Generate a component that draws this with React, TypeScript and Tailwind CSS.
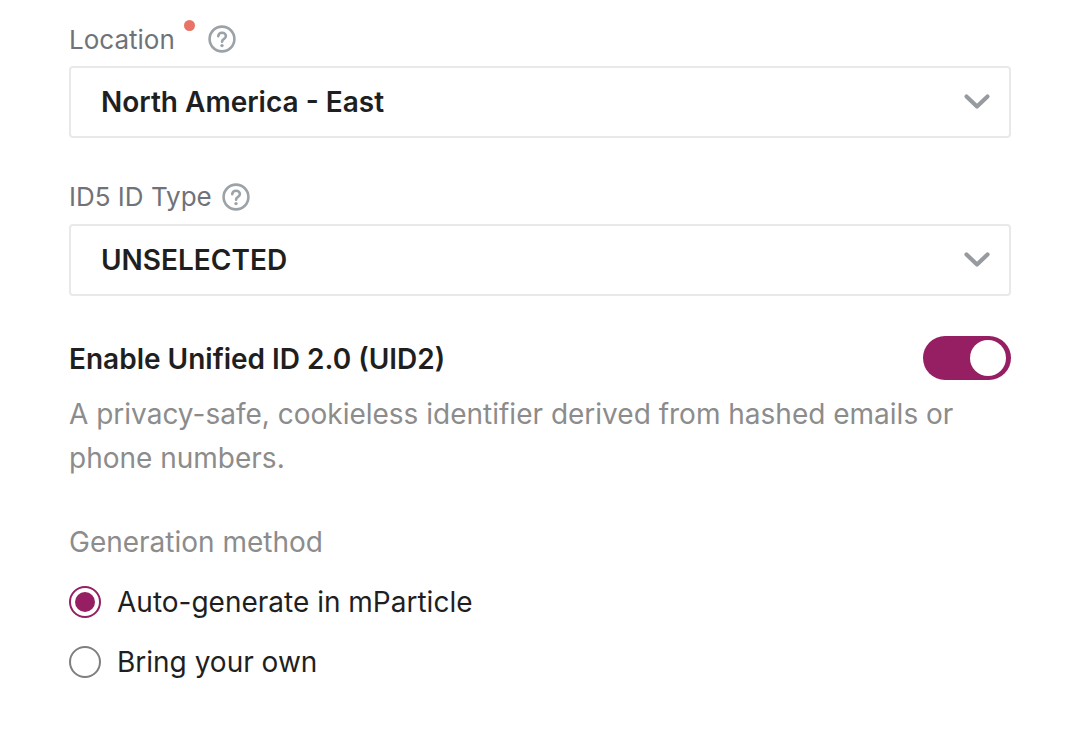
function HelpIcon() {
  return (
    <svg width="28" height="28" viewBox="0 0 28 28" fill="none">
      <circle cx="14" cy="14" r="12.4" stroke="#9ca3a8" strokeWidth="2.6" />
      <path d="M10.2 11.2c.2-2.2 1.8-3.5 3.9-3.5 2.2 0 3.8 1.4 3.8 3.2 0 1.4-.8 2.2-1.9 2.9-1.2.7-1.9 1.3-1.9 2.6v.4" stroke="#9ca3a8" strokeWidth="2.6" strokeLinecap="round" />
      <circle cx="14" cy="20.6" r="1.7" fill="#9ca3a8" />
    </svg>
  );
}

function Chevron() {
  return (
    <svg width="28" height="18" viewBox="0 0 28 18" fill="none">
      <path d="M3.5 3.5 14 13.5 24.500 3.500" stroke="#979b9f" strokeWidth="4.2" strokeLinecap="round" strokeLinejoin="round" />
    </svg>
  );
}

function SelectBox({ value }: { value: string }) {
  return (
    <div className="flex h-[72px] w-[942px] items-center justify-between rounded-[4px] border-2 border-[#e9e9e9] bg-white pl-[30px] pr-[18px]">
      <span className="pb-[1px] text-[28px] font-semibold text-[#1f1f1f]">{value}</span>
      <Chevron />
    </div>
  );
}

export default function App() {
  return (
    <div className="h-[732px] w-[1082px] overflow-hidden bg-white pl-[69px] font-['Inter',sans-serif]">
      <div className="flex h-[66px] items-center pt-[12px]">
        <span className="text-[26px] text-[#6f7379]">Location</span>
        <span className="relative ml-[33px] flex">
          <span className="absolute -left-[24px] -top-[5px] h-[11px] w-[11px] rounded-full bg-[#ea7366]" />
          <HelpIcon />
        </span>
      </div>
      <SelectBox value="North America - East" />

      <div className="flex h-[86px] items-center gap-[10px] pt-[32px]">
        <span className="text-[26px] leading-[34px] text-[#6f7379]">ID5 ID Type</span>
        <HelpIcon />
      </div>
      <SelectBox value="UNSELECTED" />

      <div className="mt-[40px] flex h-[44px] w-[942px] items-center justify-between">
        <span className="pt-[1px] text-[28px] font-semibold text-[#1f1f1f]">Enable Unified ID 2.0 (UID2)</span>
        <div className="flex h-[44px] w-[88px] items-center justify-end rounded-full bg-[#951f62] pr-[5px]">
          <div className="h-[36px] w-[36px] rounded-full bg-white" />
        </div>
      </div>

      <p className="mt-[12px] w-[900px] text-[28px] leading-[44px] text-[#8c8c8c]">
        A privacy-safe, cookieless identifier derived from hashed emails or phone numbers.
      </p>

      <div className="mt-[45px] text-[28px] leading-[34px] text-[#8c8c8c]">Generation method</div>

      <div className="mt-[26px] flex h-[34px] items-center gap-[16px]">
        <div className="flex h-[32px] w-[32px] items-center justify-center rounded-full border-2 border-[#951f62]">
          <div className="h-[20px] w-[20px] rounded-full bg-[#951f62]" />
        </div>
        <span className="text-[28px] text-[#1f1f1f]">Auto-generate in mParticle</span>
      </div>
      <div className="mt-[26px] flex h-[34px] items-center gap-[16px]">
        <div className="h-[32px] w-[32px] rounded-full border-2 border-[#7f7f7f]" />
        <span className="text-[28px] text-[#1f1f1f]">Bring your own</span>
      </div>
    </div>
  );
}
